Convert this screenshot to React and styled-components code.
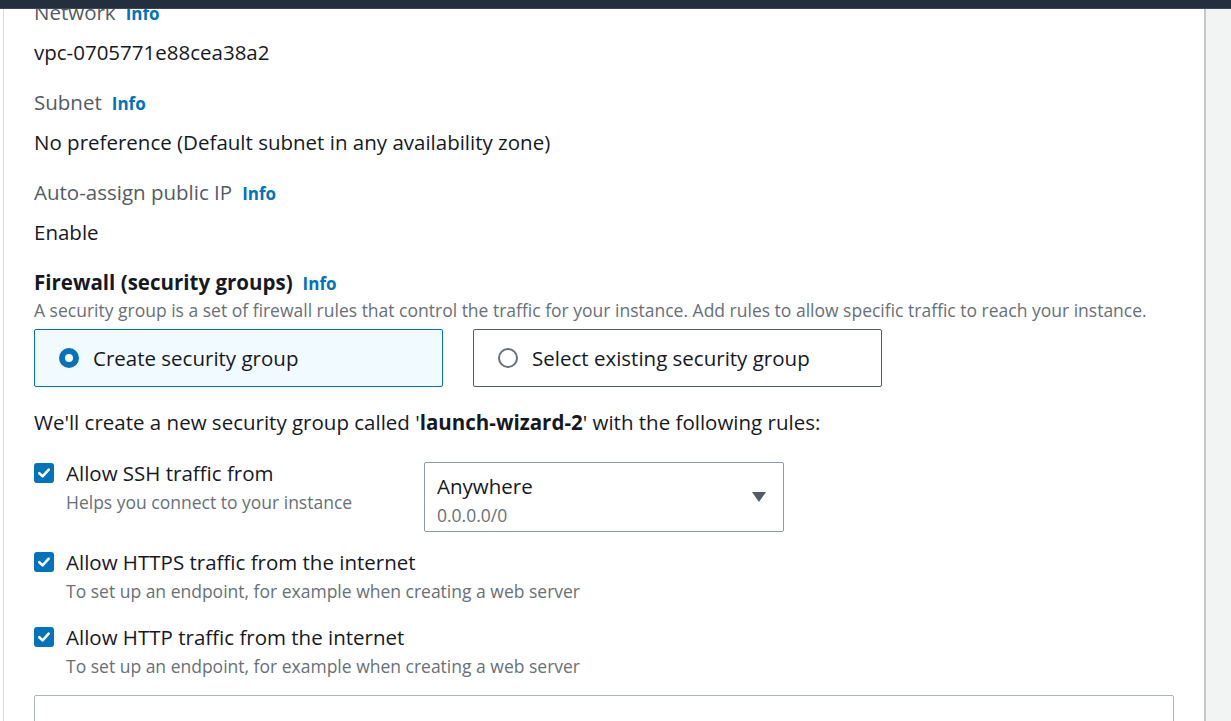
import React from "react";
import styled, { createGlobalStyle } from "styled-components";

const Global = createGlobalStyle`
  html, body { margin: 0; padding: 0; }
  *, *::before, *::after { box-sizing: border-box; }
  body {
    font-family: "Open Sans", "Noto Sans", Arial, sans-serif;
    background: #f2f3f3;
    color: #16191f;
    overflow: hidden;
  }
`;

const TopBar = styled.div`
  position: fixed;
  top: 0; left: 0; right: 0;
  height: 9px;
  background: #232f3e;
  border-bottom: 1px solid #3b4654;
  z-index: 10;
`;

const Page = styled.div`
  display: flex;
  height: 721px;
  background: #f2f3f3;
`;

const LeftStrip = styled.div`
  flex: 0 0 4px;
  background: #fff;
  border-right: 1px solid #d5dbdb;
`;

const Panel = styled.main`
  flex: 0 0 1202px;
  background: #fff;
  padding: 0 30px 0 30px;
  border-right: 2px solid #c4c9cc;
  display: flex;
  flex-direction: column;
  overflow: hidden;
`;

const Field = styled.div`
  display: flex;
  flex-direction: column;
  gap: 16px;
  margin-bottom: 26px;
`;

const Label = styled.div`
  height: 24px;
  font-size: 20.5px;
  line-height: 24px;
  color: ${(p) => (p.$strong ? "#16191f" : "#545b64")};
  font-weight: ${(p) => (p.$strong ? 700 : 400)};
  white-space: nowrap;
`;

const Info = styled.span`
  margin-left: 10px;
  font-size: 17px;
  line-height: 1;
  font-weight: 700;
  color: #0073bb;
`;

const Value = styled.div`
  height: 24px;
  font-size: 20.5px;
  line-height: 24px;
  color: #16191f;
  white-space: nowrap;
`;

const Description = styled.div`
  font-size: 17.5px;
  line-height: 22px;
  color: #687078;
  margin-top: 5px;
  white-space: nowrap;
`;

const Tiles = styled.div`
  display: grid;
  grid-template-columns: 409px 409px;
  gap: 30px;
  margin-top: 8px;
`;

const Tile = styled.div`
  height: 58px;
  border: 1px solid ${(p) => (p.$selected ? "#0073bb" : "#545b64")};
  background: ${(p) => (p.$selected ? "#f1faff" : "#fff")};
  border-radius: 2px;
  display: flex;
  align-items: center;
  padding-left: 24px;
  gap: 14px;
  font-size: 20.5px;
  color: #16191f;
  white-space: nowrap;
`;

const Radio = styled.span`
  width: 20px;
  height: 20px;
  border-radius: 50%;
  border: ${(p) => (p.$checked ? "6px solid #0073bb" : "2px solid #687078")};
  background: #fff;
  flex: none;
`;

const Intro = styled.div`
  height: 24px;
  font-size: 20.5px;
  line-height: 24px;
  color: #16191f;
  margin-top: 23px;
  white-space: nowrap;
  b { font-weight: 700; }
`;

const Rules = styled.div`
  display: flex;
  flex-direction: column;
  margin-top: 27px;
`;

const RuleRow = styled.div`
  display: flex;
  align-items: flex-start;
  margin-bottom: ${(p) => p.$after}px;
`;

const CheckCol = styled.div`
  display: flex;
  gap: 12px;
  flex: ${(p) => (p.$width ? `0 0 ${p.$width}px` : "1 1 auto")};
`;

const Check = styled.span`
  width: 20px;
  height: 20px;
  margin-top: 2px;
  border-radius: 3px;
  background: #0073bb;
  display: flex;
  align-items: center;
  justify-content: center;
  flex: none;
`;

const RuleText = styled.div`
  display: flex;
  flex-direction: column;
  gap: 6px;
  white-space: nowrap;
`;

const RuleLabel = styled.div`
  height: 24px;
  font-size: 20.5px;
  line-height: 24px;
  color: #16191f;
`;

const RuleHelp = styled.div`
  height: 22px;
  font-size: 17.5px;
  line-height: 22px;
  color: #687078;
`;

const SelectBox = styled.div`
  width: 360px;
  height: 70px;
  border: 1px solid #8d99a8;
  border-radius: 2px;
  display: flex;
  align-items: center;
  justify-content: space-between;
  padding: 0 16px 0 12px;
  margin-top: 1px;
`;

const SelectText = styled.div`
  display: flex;
  flex-direction: column;
  gap: 6px;
  align-self: flex-start;
  padding-top: 11px;
`;

const SelectMain = styled.div`
  height: 24px;
  font-size: 20.5px;
  line-height: 24px;
  color: #16191f;
`;

const SelectSub = styled.div`
  height: 22px;
  font-size: 17.5px;
  line-height: 22px;
  color: #687078;
`;

const BottomBox = styled.div`
  flex: none;
  height: 60px;
  border: 1px solid #aab7b8;
  border-radius: 2px;
  margin-top: 18px;
`;

const Gutter = styled.div`
  flex: 1;
  background: #f2f3f3;
`;

const CheckMark = () => (
  <svg width="14" height="14" viewBox="0 0 14 14">
    <path d="M2.3 7.2 L5.6 10.4 L11.7 3.6" fill="none" stroke="#fff" strokeWidth="2.6" strokeLinecap="round" strokeLinejoin="round" />
  </svg>
);

const Caret = () => (
  <svg width="16" height="12" viewBox="0 0 16 12">
    <path d="M1 1 H15 L8 11 Z" fill="#545b64" />
  </svg>
);

const Rule = ({ label, help, after, width, children }) => (
  <RuleRow $after={after}>
    <CheckCol $width={width}>
      <Check><CheckMark /></Check>
      <RuleText>
        <RuleLabel>{label}</RuleLabel>
        <RuleHelp>{help}</RuleHelp>
      </RuleText>
    </CheckCol>
    {children}
  </RuleRow>
);

export default function App() {
  return (
    <>
      <Global />
      <TopBar />
      <Page>
        <LeftStrip />
        <Panel>
          <Field>
            <Label>Network<Info>Info</Info></Label>
            <Value>vpc-0705771e88cea38a2</Value>
          </Field>
          <Field>
            <Label>Subnet<Info>Info</Info></Label>
            <Value>No preference (Default subnet in any availability zone)</Value>
          </Field>
          <Field>
            <Label>Auto-assign public IP<Info>Info</Info></Label>
            <Value>Enable</Value>
          </Field>
          <Label $strong>Firewall (security groups)<Info>Info</Info></Label>
          <Description>
            A security group is a set of firewall rules that control the traffic for your instance. Add rules to allow specific traffic to reach your instance.
          </Description>
          <Tiles>
            <Tile $selected><Radio $checked />Create security group</Tile>
            <Tile><Radio />Select existing security group</Tile>
          </Tiles>
          <Intro>We'll create a new security group called '<b>launch-wizard-2</b>' with the following rules:</Intro>
          <Rules>
            <Rule label="Allow SSH traffic from" help="Helps you connect to your instance" after={18} width={390}>
              <SelectBox>
                <SelectText>
                  <SelectMain>Anywhere</SelectMain>
                  <SelectSub>0.0.0.0/0</SelectSub>
                </SelectText>
                <Caret />
              </SelectBox>
            </Rule>
            <Rule label="Allow HTTPS traffic from the internet" help="To set up an endpoint, for example when creating a web server" after={23} />
            <Rule label="Allow HTTP traffic from the internet" help="To set up an endpoint, for example when creating a web server" after={0} />
          </Rules>
          <BottomBox />
        </Panel>
        <Gutter />
      </Page>
    </>
  );
}
